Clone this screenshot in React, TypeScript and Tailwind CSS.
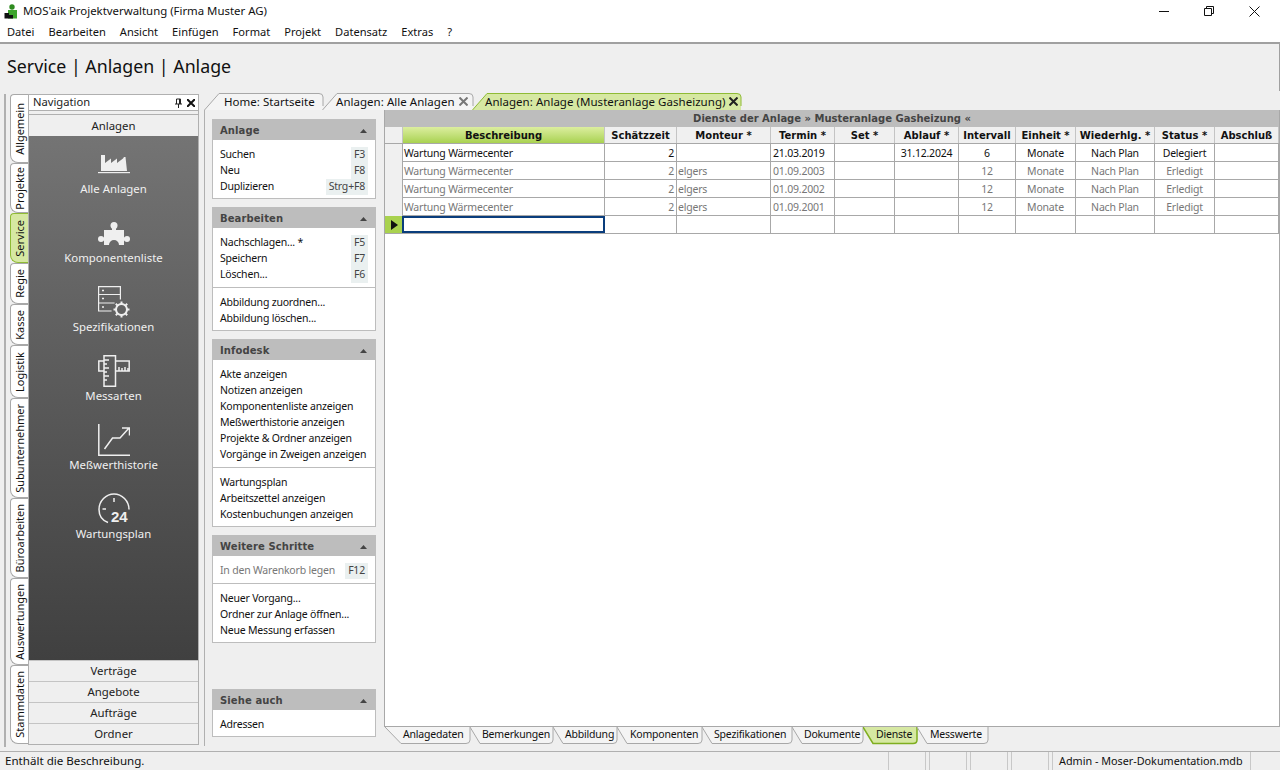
const UI = "font-['Noto_Sans','Liberation_Sans',sans-serif]";

const vtabs: [string, number, boolean?][] = [
  ["Allgemein", 69],
  ["Projekte", 50],
  ["Service", 50, true],
  ["Regie", 41],
  ["Kasse", 41],
  ["Logistik", 53],
  ["Subunternehmer", 100],
  ["Büroarbeiten", 80],
  ["Auswertungen", 87],
  ["Stammdaten", 79],
];

function Factory() {
  return (
    <svg width="32" height="32" viewBox="0 0 32 32" fill="#efefef">
      <path d="M0 24h32v1.200H0z" />
      <path d="M3 23V7h4v8l6-4.500V15l6-4.500V15l6-4.500 1-1.500h1.500l1.500 14z" />
    </svg>
  );
}
function Puzzle() {
  return (
    <svg width="32" height="32" viewBox="0 0 32 32" fill="#efefef">
      <path d="M6 13H14V9h4v4H26V28H21A5 5 0 0 0 11 28H6Z" />
      <circle cx="16" cy="8.500" r="3.500" />
      <circle cx="3" cy="22" r="3" />
      <circle cx="29" cy="22" r="3" />
      <path d="M3 20.500h3v3H3zM26 20.500h3v3h-3z" />
    </svg>
  );
}
function Spec() {
  return (
    <svg width="32" height="32" viewBox="0 0 32 32" fill="none" stroke="#efefef" strokeWidth="1.200">
      <path d="M.6 8.500V.6h21.800V8.500M.6 8.500h21.800M.6 8.500v8.500h16M22.400 8.500v5M.6 17v8h13" />
      <path d="M4 4.500h2M4 12.500h2M4 21h2" strokeWidth="1.500" />
      <circle cx="23.500" cy="23.500" r="5.500" strokeWidth="2" />
      <path d="M23.500 15.500v2.500M23.500 29v2.500M15.500 23.500H18M29 23.500h2.500M17.800 17.800l1.800 1.800M27.400 27.400l1.800 1.800M17.800 29.200l1.800-1.800M27.400 19.600l1.800-1.800" strokeWidth="2" />
    </svg>
  );
}
function Ruler() {
  return (
    <svg width="32" height="32" viewBox="0 0 32 32" fill="none" stroke="#efefef" strokeWidth="1.500">
      <path d="M6 6H.8v10H6M6 .8h11.500v30.400H6zM17.500 6h13.700v10h-13.700" />
      <path d="M6 5h5M6 9h3M6 13h5M6 17h3M6 21h5M6 25h3M21 16v-4M24 16v-3M27 16v-4M30 16v-3" />
    </svg>
  );
}
function Chart() {
  return (
    <svg width="32" height="32" viewBox="0 0 32 32" fill="none" stroke="#efefef" strokeWidth="1.500">
      <path d="M.8 0v31.200H32" />
      <path d="M6.500 25l8-11h7.500l9-10M24 4h7.500v7.500" />
    </svg>
  );
}
function Clock() {
  return (
    <svg width="32" height="32" viewBox="0 0 32 32" fill="none" stroke="#efefef">
      <path d="M10 29.500C4.500 27.500 1 22.500 1 16.500 1 8 8 1 16 1s15 7 15 15.500" strokeWidth="1.500" />
      <path d="M16 5v4M4.500 16h3.500" strokeWidth="1.500" />
      <text x="13" y="29" fill="#efefef" stroke="none" fontSize="15" fontWeight="700" fontFamily="Liberation Sans, sans-serif">24</text>
    </svg>
  );
}

const navItems: [string, () => any][] = [
  ["Alle Anlagen", Factory],
  ["Komponentenliste", Puzzle],
  ["Spezifikationen", Spec],
  ["Messarten", Ruler],
  ["Meßwerthistorie", Chart],
  ["Wartungsplan", Clock],
];

function TopTab({ w, label, active, closable, pl }: { w: number; label: string; active?: boolean; closable?: boolean; pl: number }) {
  const fill = active ? "#d6e8a2" : "#f4f4f4";
  const stroke = active ? "#8fbb35" : "#a8a8a8";
  return (
    <div className="relative h-[17px] shrink-0 -mr-[3px]" style={{ width: w }}>
      <svg className="absolute inset-0" width={w} height="17" fill="none">
        <path d={`M.5 17 L15 .5 H${w - 6} Q${w - 2} .5 ${w - 2} 4 V17 Z`} fill={fill} />
        <path d={`M.5 17 L15 .5 H${w - 6} Q${w - 2} .5 ${w - 2} 4 V13`} stroke={stroke} />
      </svg>
      <div className="relative flex h-[17px] items-center whitespace-nowrap text-[11.500px] tracking-[0.03px] text-[#111]" style={{ paddingLeft: pl }}>
        {label}
        {closable && (
          <svg className="ml-[4px]" width="9" height="9" viewBox="0 0 9 9" stroke={active ? "#222" : "#777"} strokeWidth="2">
            <path d="M.5.500l8 8M8.500.500l-8 8" />
          </svg>
        )}
      </div>
    </div>
  );
}

function Shortcut({ k }: { k: string }) {
  return <span className="ml-auto flex h-[16px] items-center bg-[#eaf0f0] px-[3px] text-[#444]">{k}</span>;
}

function Row({ t, k, dim }: { t: string; k?: string; dim?: boolean }) {
  return (
    <div className={"flex h-[16px] items-center whitespace-nowrap " + (dim ? "text-[#777]" : "text-[#111]")}>
      <span>{t}</span>
      {k && <Shortcut k={k} />}
    </div>
  );
}

function Panel({ title, groups }: { title: string; groups: [string, string?, boolean?][][] }) {
  return (
    <div className="w-[164px] shrink-0">
      <div className="flex h-[21px] items-center justify-between bg-[#bdbdbd] pl-[8px] pr-[9px] pt-[2px]">
        <span className="text-[10px] tracking-[0.1px] font-bold text-[#444] font-['DejaVu_Sans',sans-serif]">{title}</span>
        <svg width="7" height="4" viewBox="0 0 7 4" fill="#444"><path d="M3.500 0L7 4H0z" /></svg>
      </div>
      <div className="border-x border-b border-[#bdbdbd] bg-white">
        {groups.map((g, i) => (
          <div key={i} className={"pl-[7px] pr-[7px] pt-[7px] " + (i < groups.length - 1 ? "pb-[4px] " : "pb-[3px] ") + (i > 0 ? "border-t border-[#bdbdbd]" : "")}>
            {g.map((r) => (
              <Row key={r[0]} t={r[0]} k={r[1]} dim={r[2]} />
            ))}
          </div>
        ))}
      </div>
    </div>
  );
}

const cols = "grid grid-cols-[18px_202px_72px_94px_64px_60px_64px_57px_60px_79px_60px_64px]";
const headers = ["Beschreibung", "Schätzzeit", "Monteur *", "Termin *", "Set *", "Ablauf *", "Intervall", "Einheit *", "Wiederhlg. *", "Status *", "Abschluß"];
const rows = [
  ["Wartung Wärmecenter", "2", "", "21.03.2019", "", "31.12.2024", "6", "Monate", "Nach Plan", "Delegiert", ""],
  ["Wartung Wärmecenter", "2", "elgers", "01.09.2003", "", "", "12", "Monate", "Nach Plan", "Erledigt", ""],
  ["Wartung Wärmecenter", "2", "elgers", "01.09.2002", "", "", "12", "Monate", "Nach Plan", "Erledigt", ""],
  ["Wartung Wärmecenter", "2", "elgers", "01.09.2001", "", "", "12", "Monate", "Nach Plan", "Erledigt", ""],
];

function cellAlign(i: number) {
  if (i === 0 || i === 2) return "justify-start pl-[1px]";
  if (i === 3) return "justify-start pl-[2px]";
  if (i === 1) return "justify-end pr-[2px]";
  return "justify-center";
}

function BottomTab({ w, label, active, s = 10, pl = 12 }: { w: number; label: string; active?: boolean; s?: number; pl?: number }) {
  const d = `M0 0 L${s} 16.500 H${w - 4} Q${w} 16.500 ${w} 13 V0`;
  return (
    <div className="relative h-[18px] shrink-0" style={{ width: w }}>
      <svg className="absolute inset-0" width={w + 2} height="18" fill="none">
        <path d={d + " Z"} fill={active ? "#d6e8a2" : "#f4f4f4"} />
        <path d={d} stroke={active ? "#7fae20" : "#a8a8a8"} strokeWidth={active ? 1.500 : 1} />
      </svg>
      <div className="relative flex h-[16px] items-center whitespace-nowrap text-[#111]" style={{ paddingLeft: pl }}>{label}</div>
    </div>
  );
}

export default function App() {
  return (
    <div className={"flex h-[770px] w-[1280px] flex-col overflow-hidden bg-[#efefef] text-[10.500px] tracking-[-0.2px] " + UI}>
      <div className="bg-white">
        <div className="flex h-[22px] items-center pl-[4px]">
          <svg width="15" height="15" viewBox="0 0 15 15">
            <circle cx="8" cy="3" r="2.700" fill="#2e8b1f" />
            <path d="M4 6h9v8.500H4z" fill="#3da52c" />
            <path d="M.5 9h4.500v5.500H.5zM5 11h4v3.500H5z" fill="#111" />
          </svg>
          <span className="ml-[4px] text-[11.400px] tracking-normal text-[#111]">MOS'aik Projektverwaltung (Firma Muster AG)</span>
          <div className="ml-auto flex items-center pr-[20px]">
            <svg width="10" height="10" viewBox="0 0 10 10" stroke="#111"><path d="M0 5.500h10" /></svg>
            <svg className="ml-[35px]" width="10" height="10" viewBox="0 0 10 10" stroke="#111" fill="none"><path d="M.5 2.500h7v7h-7zM2.500 2.500v-2h7v7h-2" /></svg>
            <svg className="ml-[35px]" width="11" height="11" viewBox="0 0 11 11" stroke="#111" fill="none"><path d="M.5.500l10 10M10.500.500l-10 10" /></svg>
          </div>
        </div>
        <div className="flex h-[20px] items-center gap-[14px] pl-[7px] text-[11.100px] tracking-normal text-[#111]">
          {["Datei", "Bearbeiten", "Ansicht", "Einfügen", "Format", "Projekt", "Datensatz", "Extras", "?"].map((m) => (
            <span key={m}>{m}</span>
          ))}
        </div>
      </div>
      <div className="h-[49px] shrink-0 border-t-2 border-r border-[#a0a0a0] pl-[7px] pt-[8px] text-[17.800px] leading-[28px] tracking-normal text-[#111]">
        Service | Anlagen | Anlage
      </div>

      <div className="flex h-[656px] shrink-0 pl-[4px] pt-[3px]">
        <div className="flex border-l-2 border-[#b0b0b0] pl-[4px]">
          <div className="flex w-[18px] flex-col">
            {vtabs.map(([t, h, active]) => (
              <div
                key={t}
                className={
                  "flex shrink-0 items-center justify-center rounded-tl-[4px] rounded-bl-[8px] border-y border-l pl-[1px] text-[11px] tracking-normal text-[#111] " +
                  (active ? "border-[#8fbb35] bg-[#d6e8a2]" : "border-[#a8a8a8] bg-white")
                }
                style={{ height: h }}
              >
                <span className="rotate-180 whitespace-nowrap [writing-mode:vertical-rl]">{t}</span>
              </div>
            ))}
          </div>
          <div className="flex h-[651px] w-[171px] flex-col border border-[#b0b0b0]">
            <div className="flex h-[15px] shrink-0 items-center bg-white pl-[4px] text-[11.200px] tracking-normal text-[#222]">
              Navigation
              <svg className="ml-auto" width="9" height="10" viewBox="0 0 9 10" stroke="#222" fill="none"><path d="M2.500 6V1h4v5M1 6h7M4.500 6v4M5.500 1v5" /></svg>
              <svg className="ml-[4px] mr-[3px]" width="8" height="8" viewBox="0 0 8 8" stroke="#111" strokeWidth="2"><path d="M0 0l8 8M8 0L0 8" /></svg>
            </div>
            <div className="h-[5px] shrink-0 border-y border-[#b0b0b0] bg-[#efefef]" />
            <div className="flex h-[21px] shrink-0 items-center justify-center text-[11.400px] tracking-normal text-[#222]">Anlagen</div>
            <div className="flex flex-1 flex-col items-center bg-gradient-to-b from-[#747474] to-[#404040] pt-[12px]">
              {navItems.map(([t, Ic]) => (
                <div key={t} className="flex h-[69px] w-full flex-col items-center">
                  <Ic />
                  <span className="mt-[1px] text-[11.400px] leading-[16px] tracking-normal text-[#f0f0f0]">{t}</span>
                </div>
              ))}
            </div>
            {["Verträge", "Angebote", "Aufträge", "Ordner"].map((t) => (
              <div key={t} className="flex h-[21px] shrink-0 items-center justify-center border-t border-[#c4c4c4] text-[11.400px] tracking-normal text-[#222]">
                {t}
              </div>
            ))}
          </div>
        </div>

        <div className="ml-[5px] -mt-[1px] flex w-[1076px] flex-col">
          <div className="flex h-[17px] shrink-0">
            <TopTab w={121} label="Home: Startseite" pl={20} />
            <TopTab w={153} label="Anlagen: Alle Anlagen" closable pl={14} />
            <TopTab w={271} label="Anlagen: Anlage (Musteranlage Gasheizung)" active closable pl={13} />
          </div>
          <div className="flex h-[636px] border-l border-[#b0b0b0]">
            <div className="flex w-[179px] shrink-0 flex-col gap-[8px] pl-[7px] pt-[9px]">
              <Panel title="Anlage" groups={[[["Suchen", "F3"], ["Neu", "F8"], ["Duplizieren", "Strg+F8"]]]} />
              <Panel title="Bearbeiten" groups={[[["Nachschlagen... *", "F5"], ["Speichern", "F7"], ["Löschen...", "F6"]], [["Abbildung zuordnen..."], ["Abbildung löschen..."]]]} />
              <Panel title="Infodesk" groups={[[["Akte anzeigen"], ["Notizen anzeigen"], ["Komponentenliste anzeigen"], ["Meßwerthistorie anzeigen"], ["Projekte & Ordner anzeigen"], ["Vorgänge in Zweigen anzeigen"]], [["Wartungsplan"], ["Arbeitszettel anzeigen"], ["Kostenbuchungen anzeigen"]]]} />
              <Panel title="Weitere Schritte" groups={[[["In den Warenkorb legen", "F12", true]], [["Neuer Vorgang..."], ["Ordner zur Anlage öffnen..."], ["Neue Messung erfassen"]]]} />
              <div className="mt-auto mb-[9px]">
                <Panel title="Siehe auch" groups={[[["Adressen"]]]} />
              </div>
            </div>
            <div className="flex min-w-0 flex-1 flex-col">
              <div className="flex h-[616px] flex-col border-l border-r border-[#a8a8a8] bg-white">
                <div className="flex h-[17px] shrink-0 items-center justify-center bg-[#bdbdbd] font-['DejaVu_Sans',sans-serif] text-[10px] tracking-normal font-bold text-[#444]">
                  Dienste der Anlage » Musteranlage Gasheizung «
                </div>
                <div className={cols + " h-[17px] border-b border-[#a8a8a8] bg-[#f0f0f0] font-['DejaVu_Sans',sans-serif] text-[10px] tracking-normal font-bold text-[#111]"}>
                  <div className="border-r border-[#c4c4c4]" />
                  {headers.map((h, i) => (
                    <div key={h} className={"flex items-center justify-center whitespace-nowrap border-r border-[#c4c4c4] " + (i === 0 ? "bg-gradient-to-b from-[#dcee9e] to-[#a9d24f]" : "")}>
                      {h}
                    </div>
                  ))}
                </div>
                {rows.map((r, ri) => (
                  <div key={ri} className={cols + " h-[18px] border-b border-[#a8a8a8] " + (ri === 0 ? "text-[#111]" : "text-[#777]")}>
                    <div className="border-r border-[#a8a8a8] bg-[#f0f0f0]" />
                    {r.map((c, i) => (
                      <div key={i} className={"flex items-center whitespace-nowrap border-r border-[#a8a8a8] pt-[2px] " + cellAlign(i)}>
                        {c}
                      </div>
                    ))}
                  </div>
                ))}
                <div className={cols + " h-[18px] border-b border-[#a8a8a8]"}>
                  <div className="flex items-center justify-center bg-[#a9d24f]">
                    <svg width="7" height="10" viewBox="0 0 7 10" fill="#111"><path d="M0 0l7 5-7 5z" /></svg>
                  </div>
                  <div className="-ml-[1px] border-2 border-[#0a3d7c]" />
                  {headers.slice(1).map((h) => (
                    <div key={h} className="border-r border-[#a8a8a8]" />
                  ))}
                </div>
              </div>
              <div className="flex h-[18px] border-t border-[#a8a8a8] pl-[1px]">
                <BottomTab w={85} label="Anlagedaten" s={16} pl={18} />
                <BottomTab w={83} label="Bemerkungen" />
                <BottomTab w={64} label="Abbildung" />
                <BottomTab w={85} label="Komponenten" pl={13} />
                <BottomTab w={90} label="Spezifikationen" />
                <BottomTab w={71} label="Dokumente" />
                <BottomTab w={54} label="Dienste" active pl={13} />
                <BottomTab w={71} label="Messwerte" pl={13} />
              </div>
            </div>
          </div>
        </div>
      </div>

      <div className="mt-[4px] flex h-[19px] shrink-0 border-t border-[#b0b0b0] text-[11.600px] tracking-normal text-[#111]">
        <div className="flex w-[885px] items-center pl-[5px]">Enthält die Beschreibung.</div>
        {[0, 1, 2, 3].map((i) => (
          <div key={i} className="ml-[3px] w-[38px] border-x border-[#c8c8c8]" />
        ))}
        <div className="ml-[3px] flex w-[199px] items-center whitespace-nowrap border-x border-[#c8c8c8] pl-[6px] text-[10.800px]">Admin - Moser-Dokumentation.mdb</div>
      </div>
    </div>
  );
}
